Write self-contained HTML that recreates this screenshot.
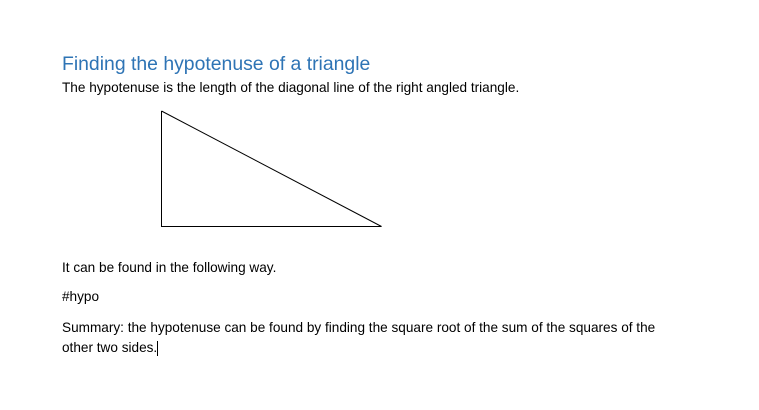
<!DOCTYPE html>
<html><head><meta charset="utf-8"><style>
body{margin:0;width:759px;height:410px;background:#fff;position:relative;overflow:hidden;font-family:"Liberation Sans",sans-serif;color:#000}
.t{position:absolute;left:62px;white-space:nowrap;font-size:13.6px;line-height:16px}
.h{position:absolute;left:62px;top:52px;font-size:19.4px;color:#2e74b5;white-space:nowrap;line-height:24px}
</style></head><body>
<div class="h">Finding the hypotenuse of a triangle</div>
<div class="t" style="top:80px">The hypotenuse is the length of the diagonal line of the right angled triangle.</div>
<svg style="position:absolute;left:0;top:0" width="759" height="410"><path d="M161.5 111 V226.5 H381.5 L161.5 111" fill="none" stroke="#000" stroke-width="1"/><line x1="157.5" y1="341" x2="157.5" y2="356" stroke="#000"/></svg>
<div class="t" style="top:260px">It can be found in the following way.</div>
<div class="t" style="top:289px">#hypo</div>
<div class="t" style="top:320px">Summary: the hypotenuse can be found by finding the square root of the sum of the squares of the</div>
<div class="t" style="top:340px">other two sides.</div>
</body></html>
